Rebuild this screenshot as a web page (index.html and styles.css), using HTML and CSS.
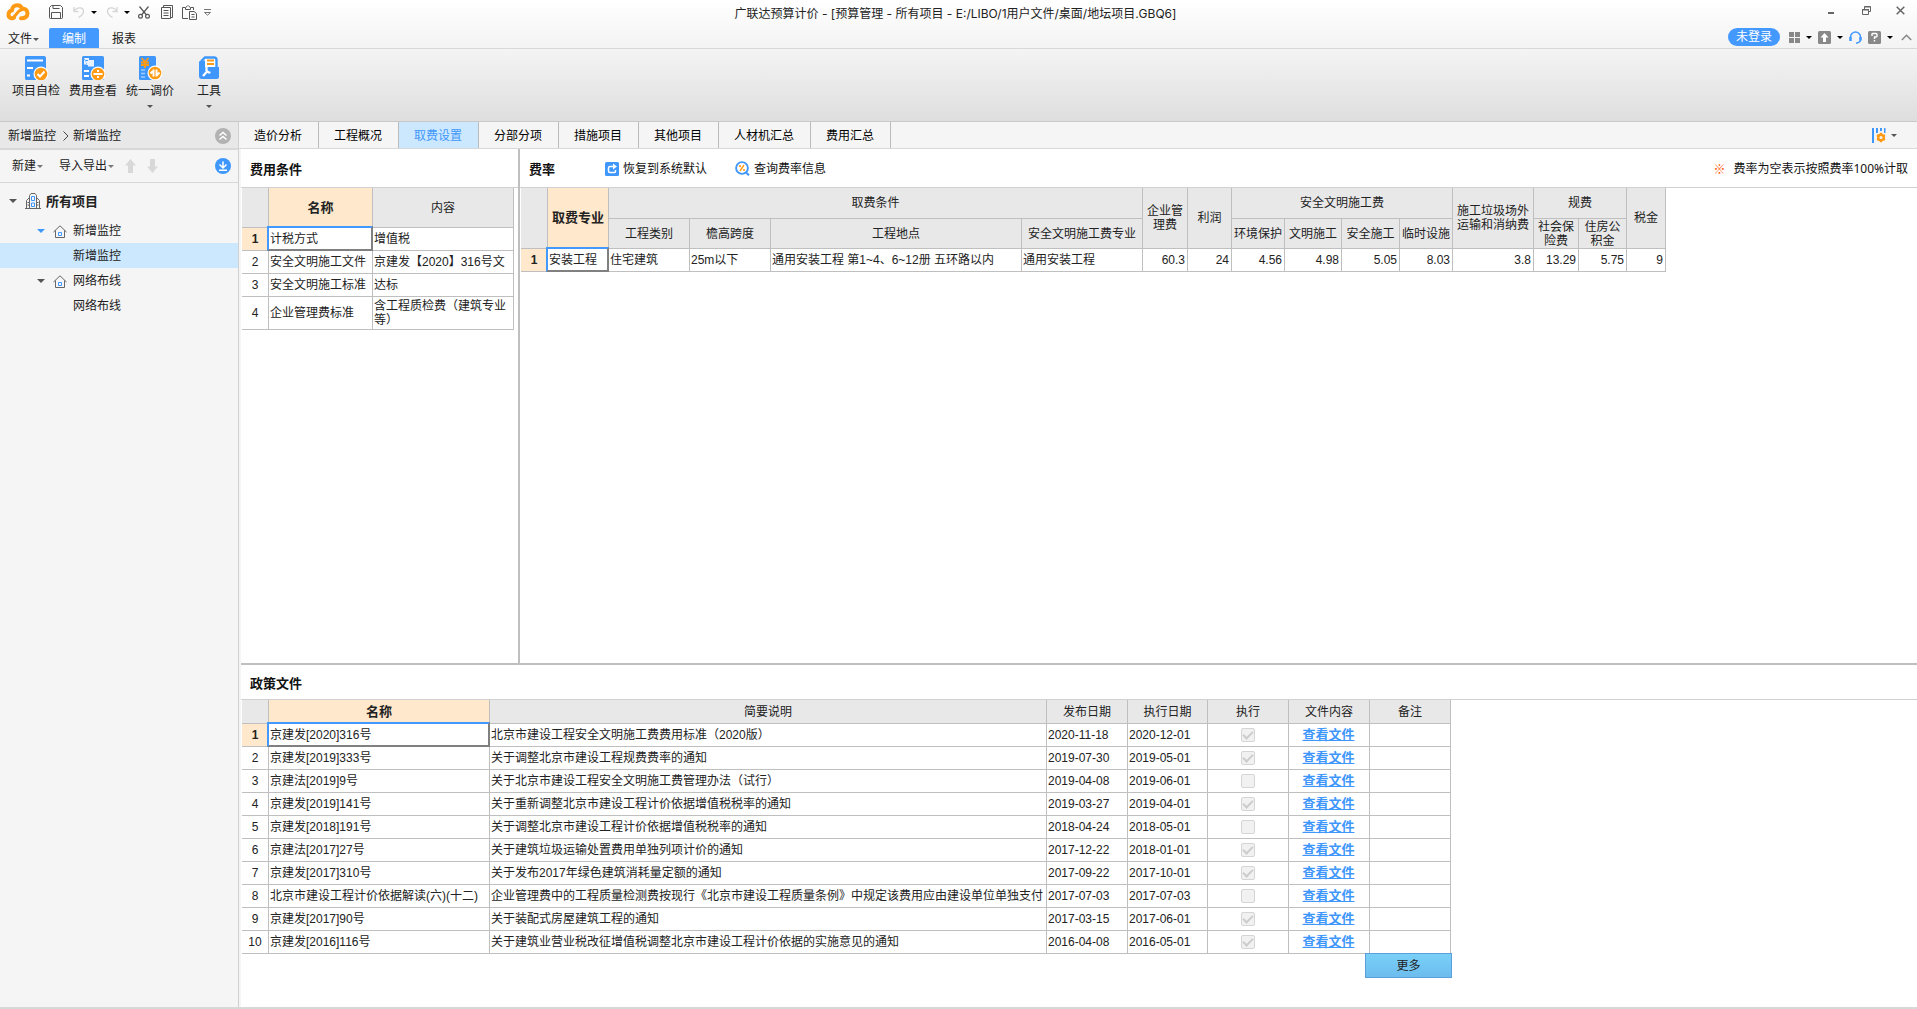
FILE: index.html
```html
<!DOCTYPE html>
<html lang="zh-CN">
<head>
<meta charset="utf-8">
<title>广联达预算计价</title>
<link rel="stylesheet" href="styles.css">
</head>
<body>
<header class="top">
  <div class="titlebar">
    <div class="quick">
      <svg class="logo" width="24" height="18" viewBox="0 0 24 18" fill="none" stroke="#ff9a14" stroke-width="4" stroke-linecap="round" stroke-linejoin="round"><path d="M8 14.500C6.500 16 2.500 15.500 2.500 11.500C2.500 8.500 4.500 7.500 6 7.500C6 4 8.500 2.300 11 2.300C14 2.300 15.500 3.800 16 6C19.500 5.300 21.500 7.500 21.500 10.500C21.500 14 18.500 15.500 15 15.300"/><path d="M7.500 14.500L12.500 8.500C14 7 16 7 16.500 6" stroke-width="3"/></svg>
      <button aria-label="保存"><svg width="14" height="14" viewBox="0 0 14 14" fill="none" stroke="#555"><path d="M.5 2.500L2.500.5H11.500L13.500 2.500V12.500Q13.500 13.500 12.500 13.500H1.500Q.5 13.500.5 12.500ZM2.500 13V7.500H11.500V13M4 .5V3.500H10.500"/></svg></button>
      <button class="q-undo" aria-label="撤销"><svg width="12" height="12" viewBox="0 0 12 12" fill="none" stroke="#d5d5d5" stroke-width="1.300"><path d="M1 1V5.500H5.500M1 5.500C4 .5 10.500 1 10.500 5.500C10.500 8 8 10 5.500 11.500"/></svg></button>
      <i class="caret black"></i>
      <button aria-label="恢复"><svg width="12" height="12" viewBox="0 0 12 12" fill="none" stroke="#d5d5d5" stroke-width="1.300"><path d="M11 1V5.500H6.500M11 5.500C8 .5 1.500 1 1.500 5.500C1.500 8 4 10 6.500 11.500"/></svg></button>
      <i class="caret black"></i>
      <button class="q-cut" aria-label="剪切"><svg width="12" height="13" viewBox="0 0 12 13" fill="none" stroke="#555" stroke-width="1.200"><path d="M1.500.5L8.500 9M10.500.5L3.500 9"/><circle cx="2.500" cy="10.300" r="1.900"/><circle cx="9.500" cy="10.300" r="1.900"/></svg></button>
      <button class="q-copy" aria-label="复制"><svg width="12" height="14" viewBox="0 0 12 14" fill="none" stroke="#555"><path d="M2.500 2V.5H11.500V12.500H10M.5 2.500H9.500V13.500H.5ZM2.500 5.500H7.500M2.500 8H7.500M2.500 10.500H7.500"/></svg></button>
      <button aria-label="粘贴"><svg width="15" height="15" viewBox="0 0 15 15" fill="none" stroke="#555"><path d="M6 13.500H.5V2.500H3M9 2.500H11.500V5M3.500 4.500V2.500L5 1.500L6 .5L7 1.500L8.500 2.500V4.500ZM7.500 6.500H12L14.500 8.500V14.500H7.500ZM9.500 9.500H12.500M9.500 12H12.500"/></svg></button>
      <button class="q-more" aria-label="更多命令"><svg width="7" height="7" viewBox="0 0 7 7" fill="none" stroke="#777"><path d="M0 .5H7M.5 3.500H6.500L3.500 6.200Z"/></svg></button>
    </div>
    <h1 class="title">广联达预算计价 - [预算管理 - 所有项目 - E:/LIBO/1用户文件/桌面/地坛项目.GBQ6]</h1>
    <div class="winctl">
      <button aria-label="最小化"><svg width="9" height="9" viewBox="0 0 9 9"><path d="M0 6H6V8H0Z" fill="#666"/></svg></button>
      <button aria-label="还原"><svg width="9" height="9" viewBox="0 0 9 9" fill="none" stroke="#666"><path d="M.5 4H6.500V8.500H.5ZM0 3.500H7M2.500 3V.5H8.500V5.500H7M2 1H9"/></svg></button>
      <button aria-label="关闭"><svg width="9" height="9" viewBox="0 0 9 9" fill="none" stroke="#666" stroke-width="1.500"><path d="M.7.7L8.300 8.300M8.300.7L.7 8.300"/></svg></button>
    </div>
  </div>
  <div class="menubar">
    <nav class="menus">
      <button class="menu">文件<i class="caret"></i></button>
      <button class="menu on">编制</button>
      <button class="menu">报表</button>
    </nav>
    <div class="account">
      <button class="login">未登录</button>
      <button aria-label="应用"><svg width="11" height="11" viewBox="0 0 11 11" fill="#888"><path d="M0 0H5V5H0ZM6 0H11V5H6ZM0 6H5V11H0ZM6 6H11V11H6Z"/></svg><i class="caret black"></i></button>
      <button aria-label="升级"><svg width="13" height="13" viewBox="0 0 13 13"><rect width="13" height="13" rx="1.500" fill="#888"/><path d="M6.500 2L10.500 6.500H8V11H5V6.500H2.500Z" fill="#fff"/></svg><i class="caret black"></i></button>
      <button aria-label="客服"><svg width="13" height="13" viewBox="0 0 13 13" fill="none" stroke="#49f" stroke-width="1.500"><path d="M1.500 7V6A5 5 0 0 1 11.500 6V8.500Q11.500 11.500 7 12.200"/><path d="M1.500 6V10M11.500 6V9.500" stroke-width="2.500"/></svg></button>
      <button aria-label="帮助"><svg width="13" height="13" viewBox="0 0 13 13"><rect width="13" height="13" rx="1.500" fill="#888"/><path d="M4 5V3.200Q4 2.500 5 2.500H8Q9 2.500 9 3.300V5Q9 6 8 6H6.500V8M6.500 9V10.500" fill="none" stroke="#fff" stroke-width="1.400"/></svg><i class="caret black"></i></button>
      <button class="fold" aria-label="折叠功能区"><svg width="11" height="7" viewBox="0 0 11 7" fill="none" stroke="#888" stroke-width="1.600"><path d="M.8 6L5.500 1.300L10.200 6"/></svg></button>
    </div>
  </div>
</header>

<section class="ribbon" aria-label="功能区">
  <button class="tool"><svg width="24" height="24" viewBox="0 0 24 24"><path d="M2 0H20Q22 0 22 2V24H2Q1 24 1 22V2Q1 0 2 0Z" fill="#3f97fb"/><path d="M3 4.500H19M3 12H9M3 19.500H6" stroke="#fff" stroke-width="2" fill="none"/><circle cx="17" cy="18" r="7.500" fill="#fff"/><circle cx="17" cy="18" r="6.300" fill="#ff9a14"/><path d="M13.500 18L16 20.500L20.500 15.500" fill="none" stroke="#fff" stroke-width="2"/></svg>项目自检</button>
  <button class="tool"><svg width="24" height="24" viewBox="0 0 24 24"><rect x="1" width="22" height="24" rx="1.500" fill="#3f97fb"/><path d="M3 2H8V4H3ZM3 2V8.500H6M5 5H9V9H5ZM7 4H13V10.500H7Z" fill="#e8f3ff"/><path d="M3 15H8M3 20H8" stroke="#fff" stroke-width="2"/><circle cx="17" cy="18" r="7.500" fill="#fff"/><circle cx="17" cy="18" r="6.300" fill="#ff9a14"/><path d="M12.500 18H21.500" stroke="#fff" stroke-width="2"/><path d="M16 14H18V16H16ZM16 20H18V22H16Z" fill="#fff"/></svg>费用查看</button>
  <button class="tool"><svg width="24" height="24" viewBox="0 0 24 24"><rect x="1" width="17" height="24" rx="1.500" fill="#3f97fb"/><path d="M3.500 2L7 6L10.500 2M3 6.500H11M3 9H11M7 5.500V12" fill="none" stroke="#ff9a14" stroke-width="1.800"/><path d="M3 14H7M3 17.500H7M3 21H7" stroke="#9dcbff" stroke-width="1.500"/><circle cx="17" cy="17" r="7.500" fill="#fff"/><circle cx="17" cy="17" r="6.300" fill="#ff9a14"/><path d="M15.500 13.500V20.500M12.500 17.500L15.500 14.500M18.500 20.500V13.500M21.500 16.500L18.500 19.500" fill="none" stroke="#fff" stroke-width="2"/></svg>统一调价<i class="caret"></i></button>
  <button class="tool apart"><svg width="24" height="24" viewBox="0 0 24 24"><path d="M5 13V4.500L8 1.500H17Q19.500 1.500 19.500 4V13" fill="#fff" stroke="#3f97fb" stroke-width="2.400"/><path d="M2 6.500Q2 4.500 4 4.500H8V11H22V21Q22 23 20 23H5Q2 23 2 20Z" fill="#3f97fb"/><path d="M10 4.500H17M10 8H17" stroke="#ff9a14" stroke-width="2"/><path d="M6 20L10 15.500M9.500 11V14.500L11.500 16.500H13.500" fill="none" stroke="#fff" stroke-width="2.200"/></svg>工具<i class="caret"></i></button>
</section>

<div class="body">
  <aside class="side">
    <div class="crumb"><span>新增监控</span><svg width="6" height="10" viewBox="0 0 6 10" fill="none" stroke="#444"><path d="M.5.5L5 5L.5 9.500"/></svg><span>新增监控</span>
      <button class="round" aria-label="收起"><svg width="16" height="16" viewBox="0 0 16 16"><circle cx="8" cy="8" r="8" fill="#b2b2b2"/><path d="M4.500 7.500L8 4.500L11.500 7.500M4.500 11.500L8 8.500L11.500 11.500" fill="none" stroke="#fff" stroke-width="1.500"/></svg></button></div>
    <div class="sidebar-tools">
      <button>新建<i class="caret gray"></i></button>
      <button>导入导出<i class="caret gray"></i></button>
      <button aria-label="上移"><svg width="11" height="14" viewBox="0 0 11 14"><path d="M5.500 0L11 6.500H8V14H3V6.500H0Z" fill="#d8d8d8"/></svg></button>
      <button aria-label="下移"><svg width="11" height="14" viewBox="0 0 11 14"><path d="M5.500 14L11 7.500H8V0H3V7.500H0Z" fill="#d8d8d8"/></svg></button>
      <button class="round" aria-label="下载"><svg width="16" height="16" viewBox="0 0 16 16"><circle cx="8" cy="8" r="8" fill="#3f97fb"/><path d="M8 3.500V9.500M4.500 6.500L8 10L11.500 6.500M4 12.200H12" fill="none" stroke="#fff" stroke-width="1.500"/></svg></button>
    </div>
    <ul class="tree">
      <li><a href="#" class="node root"><i class="caret big"></i><svg width="16" height="16" viewBox="0 0 16 16" fill="none" stroke="#666"><path d="M0 15.500H16M1.500 15V7.500L4 5M4.500 15V2.500L6 .5H10L11.500 2.500V15M12 5L14.500 7.500V15M2.500 9.500H4M2.500 12H4M12 9.500H13.500M12 12H13.500"/><path d="M6.500 3.500H9.500V7.500H6.500ZM6.500 10H9.500V13.500H6.500Z" stroke="#3f97fb"/></svg>所有项目</a>
        <ul>
          <li><a href="#" class="node unit"><i class="caret big blue"></i><svg width="14" height="13" viewBox="0 0 14 13" fill="none" stroke="#666"><path d="M.5 7L7 .8L13.500 7M2.500 5.500V12.500H11.500V5.500"/><path d="M5.500 7.500H8.500V10.500H5.500Z" stroke="#3f97fb"/></svg>新增监控</a>
            <ul><li><a href="#" class="node leaf on">新增监控</a></li></ul></li>
          <li><a href="#" class="node unit"><i class="caret big"></i><svg width="14" height="13" viewBox="0 0 14 13" fill="none" stroke="#666"><path d="M.5 7L7 .8L13.500 7M2.500 5.500V12.500H11.500V5.500"/><path d="M5.500 7.500H8.500V10.500H5.500Z" stroke="#3f97fb"/></svg>网络布线</a>
            <ul><li><a href="#" class="node leaf">网络布线</a></li></ul></li>
        </ul></li>
    </ul>
  </aside>

  <main class="work">
    <nav class="tabs">
      <button>造价分析</button><button>工程概况</button><button class="on">取费设置</button><button>分部分项</button><button>措施项目</button><button>其他项目</button><button>人材机汇总</button><button>费用汇总</button>
      <div class="tabs-end"><button class="layout" aria-label="布局设置"><svg width="14" height="15" viewBox="0 0 14 15"><path d="M0 0H2V15H0ZM4 0H6V5H4ZM8 0H10V3H8ZM12 0H13.500V5H12Z" fill="#3f97fb"/><circle cx="9" cy="9.500" r="2.800" fill="none" stroke="#ff9a14" stroke-width="2.400"/><path d="M9 4.800V6.500M9 12.500V14.200M5 7.200L6.500 8M11.500 11L13 11.800M13 7.200L11.500 8M6.500 11L5 11.800" stroke="#ff9a14" stroke-width="2"/></svg><i class="caret"></i></button></div>
    </nav>

    <div class="panes">
      <section class="pane cond">
        <div class="pane-head"><h2>费用条件</h2></div>
        <div class="sheet">
          <table class="grid t-cond">
            <colgroup><col class="c27"><col class="c104"><col class="c141"></colgroup>
            <thead><tr class="h40"><th></th><th class="hot">名称</th><th>内容</th></tr></thead>
            <tbody>
              <tr><th class="hot">1</th><td class="cur">计税方式</td><td>增值税</td></tr>
              <tr><th>2</th><td>安全文明施工文件</td><td>京建发【2020】316号文</td></tr>
              <tr><th>3</th><td>安全文明施工标准</td><td>达标</td></tr>
              <tr class="h33"><th>4</th><td>企业管理费标准</td><td class="wrap">含工程质检费（建筑专业等）</td></tr>
            </tbody>
          </table>
        </div>
      </section>

      <section class="pane rate">
        <div class="pane-head"><h2>费率</h2>
          <button class="act first"><svg width="14" height="14" viewBox="0 0 14 14"><rect width="14" height="14" rx="1.500" fill="#3f97fb"/><path d="M9 4.500H5Q3.500 4.500 3.500 6V9Q3.500 10.500 5 10.500H9.500Q10.500 10.500 10.500 9V8" fill="none" stroke="#fff" stroke-width="1.500"/><path d="M8 1.500L12 4.500L8 7.500Z" fill="#fff"/></svg>恢复到系统默认</button>
          <button class="act"><svg width="15" height="15" viewBox="0 0 15 15" fill="none"><circle cx="7" cy="7" r="5.900" stroke="#3f97fb" stroke-width="1.900"/><path d="M10.500 11L14 14.300" stroke="#3f97fb" stroke-width="2"/><path d="M9 4L5 10" stroke="#ff9a14" stroke-width="1.400"/><circle cx="5" cy="5.200" r="1.100" fill="#ff9a14"/><circle cx="9" cy="9" r="1.100" fill="#ff9a14"/></svg>查询费率信息</button>
          <p class="note"><b>※</b>费率为空表示按照费率100%计取</p>
        </div>
        <div class="sheet">
          <table class="grid t-rate">
            <colgroup><col class="c27"><col class="c61"><col class="c81"><col class="c81"><col class="c251"><col class="c121"><col class="c45"><col class="c44"><col class="c53"><col class="c57"><col class="c58"><col class="c53"><col class="c81"><col class="c45"><col class="c48"><col class="c39"></colgroup>
            <thead>
              <tr class="h31"><th rowspan="2"></th><th rowspan="2" class="hot">取费专业</th><th colspan="4">取费条件</th><th rowspan="2">企业管理费</th><th rowspan="2">利润</th><th colspan="4">安全文明施工费</th><th rowspan="2">施工垃圾场外运输和消纳费</th><th colspan="2">规费</th><th rowspan="2">税金</th></tr>
              <tr class="h30"><th>工程类别</th><th>檐高跨度</th><th>工程地点</th><th>安全文明施工费专业</th><th>环境保护</th><th>文明施工</th><th>安全施工</th><th>临时设施</th><th>社会保险费</th><th>住房公积金</th></tr>
            </thead>
            <tbody>
              <tr><th class="hot">1</th><td class="cur">安装工程</td><td>住宅建筑</td><td>25m以下</td><td>通用安装工程 第1~4、6~12册 五环路以内</td><td>通用安装工程</td><td class="n">60.3</td><td class="n">24</td><td class="n">4.56</td><td class="n">4.98</td><td class="n">5.05</td><td class="n">8.03</td><td class="n">3.8</td><td class="n">13.29</td><td class="n">5.75</td><td class="n">9</td></tr>
            </tbody>
          </table>
        </div>
      </section>
    </div>

    <section class="policy">
      <div class="pane-head"><h2>政策文件</h2></div>
      <div class="sheet">
        <div class="policy-box">
        <table class="grid t-policy">
          <colgroup><col class="c27"><col class="c221"><col class="c557"><col class="c81"><col class="c80"><col class="c81"><col class="c81"><col class="c81"></colgroup>
          <thead><tr class="h24"><th></th><th class="hot">名称</th><th>简要说明</th><th>发布日期</th><th>执行日期</th><th>执行</th><th>文件内容</th><th>备注</th></tr></thead>
          <tbody>
            <tr><th class="hot">1</th><td class="cur">京建发[2020]316号</td><td>北京市建设工程安全文明施工费费用标准（2020版）</td><td>2020-11-18</td><td>2020-12-01</td><td class="c"><input type="checkbox" aria-label="执行" checked disabled></td><td class="c"><a href="#">查看文件</a></td><td></td></tr>
            <tr><th>2</th><td>京建发[2019]333号</td><td>关于调整北京市建设工程规费费率的通知</td><td>2019-07-30</td><td>2019-05-01</td><td class="c"><input type="checkbox" aria-label="执行" checked disabled></td><td class="c"><a href="#">查看文件</a></td><td></td></tr>
            <tr><th>3</th><td>京建法[2019]9号</td><td>关于北京市建设工程安全文明施工费管理办法（试行）</td><td>2019-04-08</td><td>2019-06-01</td><td class="c"><input type="checkbox" aria-label="执行" disabled></td><td class="c"><a href="#">查看文件</a></td><td></td></tr>
            <tr><th>4</th><td>京建发[2019]141号</td><td>关于重新调整北京市建设工程计价依据增值税税率的通知</td><td>2019-03-27</td><td>2019-04-01</td><td class="c"><input type="checkbox" aria-label="执行" checked disabled></td><td class="c"><a href="#">查看文件</a></td><td></td></tr>
            <tr><th>5</th><td>京建发[2018]191号</td><td>关于调整北京市建设工程计价依据增值税税率的通知</td><td>2018-04-24</td><td>2018-05-01</td><td class="c"><input type="checkbox" aria-label="执行" disabled></td><td class="c"><a href="#">查看文件</a></td><td></td></tr>
            <tr><th>6</th><td>京建法[2017]27号</td><td>关于建筑垃圾运输处置费用单独列项计价的通知</td><td>2017-12-22</td><td>2018-01-01</td><td class="c"><input type="checkbox" aria-label="执行" checked disabled></td><td class="c"><a href="#">查看文件</a></td><td></td></tr>
            <tr><th>7</th><td>京建发[2017]310号</td><td>关于发布2017年绿色建筑消耗量定额的通知</td><td>2017-09-22</td><td>2017-10-01</td><td class="c"><input type="checkbox" aria-label="执行" checked disabled></td><td class="c"><a href="#">查看文件</a></td><td></td></tr>
            <tr><th>8</th><td>北京市建设工程计价依据解读(六)(十二)</td><td>企业管理费中的工程质量检测费按现行《北京市建设工程质量条例》中规定该费用应由建设单位单独支付</td><td>2017-07-03</td><td>2017-07-03</td><td class="c"><input type="checkbox" aria-label="执行" disabled></td><td class="c"><a href="#">查看文件</a></td><td></td></tr>
            <tr><th>9</th><td>京建发[2017]90号</td><td>关于装配式房屋建筑工程的通知</td><td>2017-03-15</td><td>2017-06-01</td><td class="c"><input type="checkbox" aria-label="执行" checked disabled></td><td class="c"><a href="#">查看文件</a></td><td></td></tr>
            <tr><th>10</th><td>京建发[2016]116号</td><td>关于建筑业营业税改征增值税调整北京市建设工程计价依据的实施意见的通知</td><td>2016-04-08</td><td>2016-05-01</td><td class="c"><input type="checkbox" aria-label="执行" checked disabled></td><td class="c"><a href="#">查看文件</a></td><td></td></tr>
          </tbody>
        </table>
        <button class="more">更多</button>
        </div>
      </div>
    </section>
  </main>
</div>
</body>
</html>
```
FILE: styles.css
```css
* { box-sizing: border-box; }
body {
  margin: 0;
  min-height: 100vh;
  display: flex;
  flex-direction: column;
  background: #f5f5f5;
  color: #222;
  font: 12px/16px "Noto Sans", "Noto Sans CJK SC", sans-serif;
}
h1, h2, p, ul { margin: 0; padding: 0; font-weight: normal; font-size: 12px; }
li { list-style: none; }
svg { display: block; flex: none; }
button {
  display: flex;
  align-items: center;
  padding: 0;
  border: 0;
  background: none;
  color: inherit;
  font: inherit;
}
.caret {
  flex: none;
  width: 0;
  height: 0;
  border: 3px solid transparent;
  border-top-color: #555;
  border-bottom: 0;
}
.caret.black { border-top-color: #000; }
.caret.gray { border-top-color: #777; }
.caret.big { border-width: 4px 4px 0; }
.caret.blue { border-top-color: #3f97fb; }

/* title and menu bars */
.top {
  background: linear-gradient(#fff, #f3f3f3);
  border-bottom: 1px solid #d8d8d8;
}
.titlebar {
  height: 26px;
  display: grid;
  grid-template-columns: 1fr auto 1fr;
  align-items: center;
  padding: 0 12px 0 6px;
}
.quick { display: flex; align-items: center; gap: 9px; padding-bottom: 2px; }
.logo { margin-right: 10px; }
.quick .caret { margin-left: -3px; }
.q-undo { margin-left: 1px; }
.q-cut { margin-left: -1px; }
.q-copy { margin-left: 2px; }
.q-more { margin-left: -2px; }
.title {
  padding-top: 2px;
  white-space: nowrap;
  font-family: Inter, "Noto Sans CJK SC", sans-serif;
}
.winctl { display: flex; justify-content: flex-end; gap: 25px; padding-bottom: 5px; }
.menubar { height: 22px; display: flex; justify-content: space-between; align-items: center; }
.menus { display: flex; align-self: flex-end; padding-left: 8px; }
.menu { height: 20px; gap: 1px; padding-top: 2px; }
.menu.on {
  width: 50px;
  justify-content: center;
  margin: 0 13px 0 10px;
  background: #49f;
  color: #fff;
  border-radius: 2px 2px 0 0;
}
.account { display: flex; align-items: center; gap: 6px; padding-right: 5px; }
.account button { gap: 6px; }
.account .login {
  height: 18px;
  padding: 0 8px;
  margin-right: 3px;
  border-radius: 9px;
  background: #49f;
  color: #fff;
}
.account .fold { margin-left: 2px; }

/* ribbon */
.ribbon {
  height: 73px;
  display: flex;
  gap: 9px;
  padding: 7px 12px 0;
  background: linear-gradient(#f4f4f4, #dedede);
  border-bottom: 1px solid #c8c8c8;
}
.tool { flex-direction: column; justify-content: flex-start; line-height: 22px; }
.tool.apart { margin-left: 14px; }
.tool .caret { margin-top: 3px; }

.body { flex: 1; display: flex; border-bottom: 2px solid #d8d8d8; }

/* project tree */
.side { width: 239px; flex: none; border-right: 1px solid #d0d0d0; }
.crumb {
  height: 28px;
  display: flex;
  align-items: center;
  gap: 7px;
  padding: 2px 7px 0 8px;
  background: #e8e8e8;
  border-bottom: 2px solid #d8d8d8;
}
.crumb span + svg + span { margin-left: -3px; }
.round { margin-left: auto; }
.sidebar-tools {
  height: 33px;
  display: flex;
  align-items: center;
  gap: 11px;
  padding: 0 7px 0 12px;
  border-bottom: 1px solid #d8d8d8;
}
.sidebar-tools button { gap: 1px; }
.sidebar-tools button:first-child { margin-right: 5px; }
.tree { padding-top: 1px; }
.node {
  height: 25px;
  display: flex;
  align-items: center;
  padding-top: 1px;
  color: inherit;
  text-decoration: none;
}
.node svg { margin: 0 6px 0 8px; }
.root { height: 32px; margin-bottom: 2px; padding-left: 9px; font-size: 13px; font-weight: bold; }
.root svg { margin-right: 5px; }
.unit { padding-left: 37px; }
.leaf { padding-left: 73px; }
.node.on { background: #cce8ff; }

/* work area */
.work { flex: 1; min-width: 0; display: flex; flex-direction: column; padding-left: 2px; }
.tabs { display: flex; height: 27px; margin-left: -2px; border-bottom: 1px solid #d8d8d8; }
.tabs > button { padding: 2px 16px 0 15px; border-right: 1px solid #bbb; color: #000; }
.tabs > .on { background: #cce8ff; color: #3f97fb; }
.tabs-end { margin-left: auto; padding-right: 20px; display: flex; align-items: center; }
.layout { gap: 5px; }
.panes { flex: 1; display: flex; background: #fff; border-bottom: 2px solid #bfbfbf; }
.cond { width: 279px; flex: none; border-right: 2px solid #bfbfbf; }
.rate { flex: 1; min-width: 0; }
.pane-head { height: 38px; display: flex; align-items: center; padding: 1px 9px 0 9px; color: #111; }
h2 { font-size: 13px; font-weight: bold; }
.act { gap: 4px; margin-left: 28px; }
.act.first { margin-left: 50px; }
.note { margin-left: auto; display: flex; gap: 8px; }
.note b { color: #f50; font-weight: normal; font-family: "Noto Sans CJK SC", sans-serif; }
.policy { background: #fff; padding-bottom: 29px; }
.policy .pane-head { height: 34px; }
.sheet { border-top: 1px solid #d0d0d0; padding-left: 1px; }

/* spreadsheet grids */
.grid {
  table-layout: fixed;
  border-collapse: separate;
  border-spacing: 0;
  font: 12px/14px "Liberation Sans", "Noto Sans CJK SC", sans-serif;
}
.grid th, .grid td {
  padding: 0 2px 0 1px;
  border: solid #bfbfbf;
  border-width: 0 1px 1px 0;
  text-align: left;
  vertical-align: middle;
  white-space: nowrap;
}
.grid th { padding: 0; font-weight: normal; text-align: center; }
.grid thead th { background: #e8e8e8; white-space: normal; }
.grid .hot { background: #ffe8cc; font-weight: bold; }
.grid thead .hot { font-size: 13px; }
.grid tbody tr { height: 23px; }
.grid .h24 { height: 24px; }
.grid .h30 { height: 30px; }
.grid .h31 { height: 31px; }
.grid .h33 { height: 33px; }
.grid .h40 { height: 40px; }
.grid td.wrap { white-space: normal; }
.grid td.n { text-align: right; }
.grid td.c { text-align: center; }
.grid td.cur { position: relative; }
.cur::after {
  content: "";
  position: absolute;
  inset: -2px -1px -1px -2px;
  border: 2px solid #808080;
  border-top-color: #49f;
  border-left-color: #49f;
}
.t-cond { width: 272px; }
.t-rate { width: 1145px; }
.t-policy { width: 1209px; }
.c27 { width: 27px; }
.c39 { width: 39px; }
.c44 { width: 44px; }
.c45 { width: 45px; }
.c48 { width: 48px; }
.c53 { width: 53px; }
.c57 { width: 57px; }
.c58 { width: 58px; }
.c61 { width: 61px; }
.c80 { width: 80px; }
.c81 { width: 81px; }
.c104 { width: 104px; }
.c121 { width: 121px; }
.c141 { width: 141px; }
.c221 { width: 221px; }
.c251 { width: 251px; }
.c557 { width: 557px; }
.grid a { color: #3f97fb; font-size: 13px; font-weight: bold; }
.grid input {
  appearance: none;
  display: block;
  width: 14px;
  height: 14px;
  margin: 0 auto;
  border: 1px solid #d5d5d5;
  border-radius: 2px;
  background: #f1f1f1;
}
.grid input:checked::after {
  content: "";
  display: block;
  width: 4px;
  height: 8px;
  margin: 0 auto;
  border: solid #ccc;
  border-width: 0 2px 2px 0;
  transform: rotate(45deg);
}
.policy-box { width: 1210px; }
.more {
  width: 87px;
  height: 25px;
  margin: -1px 0 0 auto;
  justify-content: center;
  background: linear-gradient(#7ad0f8, #6cbcee);
  border: 1px solid #5a9edc;
}
```
